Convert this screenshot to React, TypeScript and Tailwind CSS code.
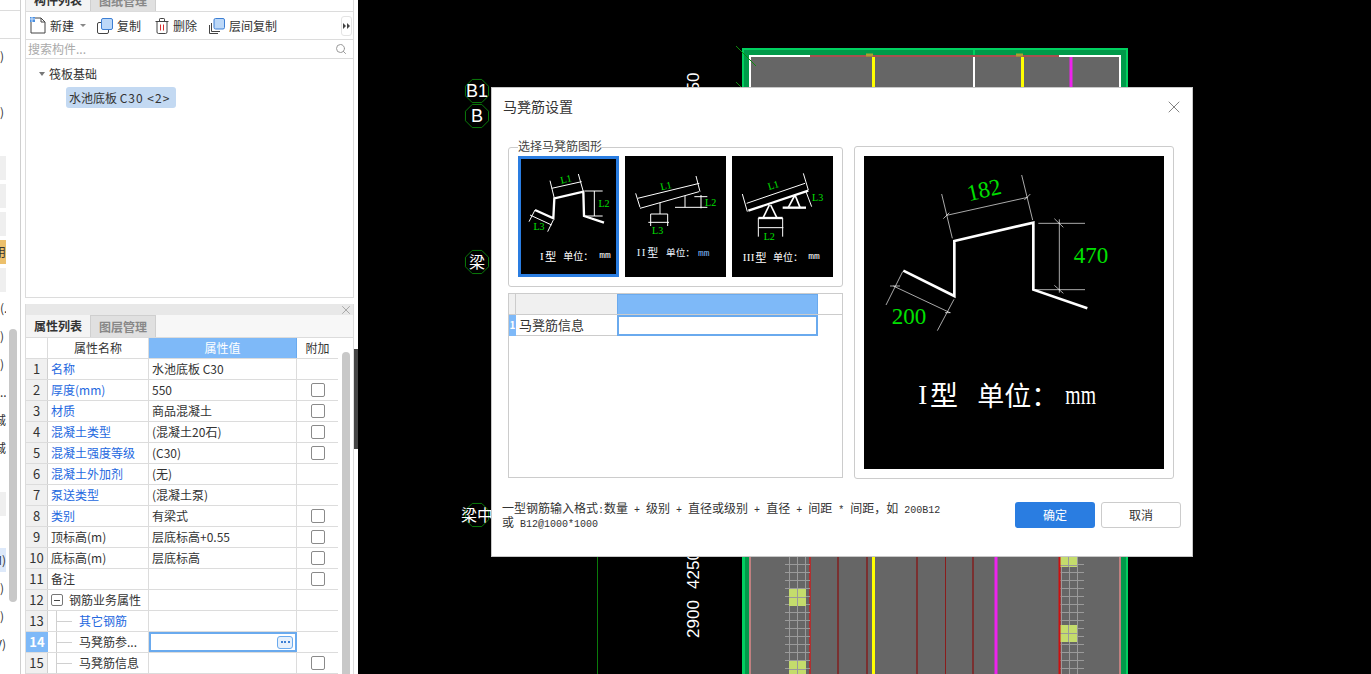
import React from "react";
import { X, Search } from "lucide-react";

const W = "#ffffff";
const G = "#00e000";

type Seg = number[];
function Lines({ segs, w, c = W }: { segs: Seg[]; w: number; c?: string }) {
  return (
    <g stroke={c} strokeWidth={w} fill="none">
      {segs.map((s, i) => (
        <line key={i} x1={s[0]} y1={s[1]} x2={s[2]} y2={s[3]} />
      ))}
    </g>
  );
}

function Label({ x, y, r = 0, t, size = 30 }: { x: number; y: number; r?: number; t: string; size?: number }) {
  return (
    <text
      x={x}
      y={y}
      fill={G}
      fontSize={size}
      textAnchor="middle"
      dominantBaseline="central"
      fontFamily="'Liberation Serif', serif"
      transform={r ? `rotate(${r} ${x} ${y})` : undefined}
    >
      {t}
    </text>
  );
}

function Cap({ x, y, t, size = 30, fill = W }: { x: number; y: number; t: string; size?: number; fill?: string }) {
  return (
    <text x={x} y={y} fill={fill} fontSize={size} dominantBaseline="central" fontFamily="'Noto Sans CJK SC', sans-serif">
      {t}
    </text>
  );
}

function Serif({ x, y, t, size = 33, fill = W, spacing = 0 }: { x: number; y: number; t: string; size?: number; fill?: string; spacing?: number }) {
  return (
    <text x={x} y={y} fill={fill} fontSize={size} letterSpacing={spacing} dominantBaseline="central" fontFamily="'Liberation Serif', serif">
      {t}
    </text>
  );
}

function Mm({ x, y, fill = W }: { x: number; y: number; fill?: string }) {
  return (
    <text x={x} y={y} fill={fill} fontSize={29} dominantBaseline="central" fontFamily="'Liberation Mono', monospace">
      mm
    </text>
  );
}

function Thumb1() {
  return (
    <svg viewBox="54 198 303 363" width={101} height={121} className="block">
      <polyline points="105,360 160,385 163,325 250,305 252,378 312,398" fill="none" stroke={W} strokeWidth={7} />
      <Lines
        w={3}
        segs={[
          [150, 272, 163, 325],
          [235, 252, 250, 305],
          [155, 295, 245, 275],
          [255, 303, 308, 303],
          [252, 378, 308, 378],
          [283, 303, 283, 378],
          [105, 360, 87, 395],
          [160, 390, 143, 425],
          [90, 375, 155, 405],
        ]}
      />
      <Label x={198} y={267} r={-13} t="L1" />
      <Label x={312} y={340} t="L2" />
      <Label x={117} y={410} t="L3" />
      <Serif x={120} y={497} t="I" />
      <Cap x={135} y={497} t="型" size={34} />
      <Cap x={190} y={497} t="单位：" />
      <Mm x={298} y={497} />
    </svg>
  );
}

function Thumb2() {
  return (
    <svg viewBox="375 198 303 363" width={101} height={121} className="block">
      <Lines
        w={3}
        segs={[
          [413, 325, 598, 280],
          [420, 355, 597, 305],
          [407, 310, 420, 352],
          [588, 258, 600, 305],
          [480, 338, 480, 372],
          [452, 372, 503, 372],
          [452, 372, 452, 408],
          [503, 372, 503, 408],
          [445, 397, 507, 397],
          [555, 318, 555, 352],
          [525, 352, 622, 352],
          [583, 320, 622, 320],
          [603, 315, 603, 355],
        ]}
      />
      <Label x={498} y={287} r={-13} t="L1" />
      <Label x={632} y={338} t="L2" />
      <Label x={473} y={420} t="L3" />
      <Serif x={410} y={487} t="II" spacing={4} fill="#dfefff" />
      <Cap x={442} y={487} t="型" size={33} fill="#eef6ff" />
      <Cap x={498} y={487} t="单位：" size={29} fill="#eef6ff" />
      <Mm x={594} y={489} fill="#7fb6f5" />
    </svg>
  );
}

function Thumb3() {
  return (
    <svg viewBox="696 198 303 363" width={101} height={121} className="block">
      <Lines w={7} segs={[[745, 362, 925, 302], [775, 384, 848, 384], [848, 353, 918, 353]]} />
      <Lines
        w={3}
        segs={[
          [740, 340, 915, 280],
          [727, 312, 742, 365],
          [910, 250, 925, 300],
          [775, 384, 775, 440],
          [848, 384, 848, 440],
          [775, 413, 850, 413],
          [918, 305, 935, 350],
        ]}
      />
      <Lines w={5} segs={[[808, 345, 790, 382], [812, 345, 830, 382], [885, 315, 865, 352], [885, 315, 900, 352]]} />
      <Label x={820} y={285} r={-17} t="L1" />
      <Label x={808} y={440} t="L2" />
      <Label x={953} y={322} t="L3" />
      <Serif x={728} y={500} t="III" spacing={1} />
      <Cap x={766} y={500} t="型" size={34} />
      <Cap x={819} y={500} t="单位：" />
      <Mm x={925} y={500} />
    </svg>
  );
}

function BigPreview() {
  return (
    <svg viewBox="42 48 900 939" width={300} height={313} className="block">
      <polyline points="160,392 313,468 313,303 550,248 550,449 712,505" fill="none" stroke={W} strokeWidth={8} />
      <Lines
        w={2}
        segs={[
          [275, 162, 307, 295],
          [515, 105, 548, 240],
          [290, 226, 533, 172],
          [280, 236, 298, 218],
          [523, 180, 541, 162],
          [565, 250, 705, 250],
          [552, 449, 705, 449],
          [628, 238, 628, 458],
          [613, 236, 640, 262],
          [613, 436, 640, 460],
          [158, 395, 108, 495],
          [312, 478, 262, 572],
          [130, 438, 300, 518],
          [120, 438, 150, 438],
          [285, 518, 302, 518],
        ]}
      />
      <Label x={402} y={150} r={-13} t="182" size={69} />
      <Label x={723} y={345} t="470" size={69} />
      <Label x={177} y={530} t="200" size={69} />
      <Serif x={205} y={766} t="I" size={81} />
      <Cap x={240} y={762} t="型" size={84} />
      <Cap x={382} y={762} t="单位：" size={81} />
      <text
        x={646}
        y={766}
        fill={W}
        fontSize={81}
        textLength={92}
        lengthAdjust="spacingAndGlyphs"
        dominantBaseline="central"
        fontFamily="'Liberation Serif', serif"
      >
        mm
      </text>
    </svg>
  );
}

function Hex({ cx, cy, t, size = 18 }: { cx: number; cy: number; t: string; size?: number }) {
  const r = 12.5;
  const pts = [0, 1, 2, 3, 4, 5, 6, 7]
    .map((i) => {
      const a = (Math.PI / 4) * i + Math.PI / 8;
      return `${cx + r * Math.cos(a)},${cy + r * Math.sin(a)}`;
    })
    .join(" ");
  return (
    <g>
      <polygon points={pts} fill="none" stroke="#0a7a0a" strokeWidth={1} />
      <text x={cx} y={cy} fill={W} fontSize={size} textAnchor="middle" dominantBaseline="central" fontFamily="'Liberation Sans', 'Noto Sans CJK SC', sans-serif">
        {t}
      </text>
    </g>
  );
}

function VText({ x, y, t }: { x: number; y: number; t: string }) {
  return (
    <text
      x={x}
      y={y}
      fill={W}
      fontSize={17}
      textAnchor="middle"
      dominantBaseline="central"
      fontFamily="'Liberation Sans', sans-serif"
      transform={`rotate(-90 ${x} ${y})`}
    >
      {t}
    </text>
  );
}

function Canvas() {
  const ticksL: number[] = [];
  for (let y = 564; y < 674; y += 8) ticksL.push(y);
  const ticksR: number[] = [];
  for (let y = 556; y < 674; y += 8) ticksR.push(y);
  return (
    <svg viewBox="358 0 1013 674" width={1013} height={674} className="block">
      <rect x={358} y={0} width={1013} height={674} fill="#000" />
      <rect x={742} y={48} width={386} height={640} fill="#00d060" />
      <rect x={744} y={50} width={382} height={640} fill="#009a4a" />
      <rect x={750} y={57} width={370} height={630} fill="#666666" />
      <Lines w={2} c="#ffffff" segs={[[749, 56, 810, 56], [1059, 56, 1121, 56], [750, 56, 750, 500], [1120, 56, 1120, 500]]} />
      <Lines w={2} c="#a85050" segs={[[810, 56, 1059, 56]]} />
      <Lines w={2} c="#00d060" segs={[[974, 49, 974, 55]]} />
      <Lines w={3} c="#ffff00" segs={[[873.5, 57, 873.5, 674], [1022.5, 57, 1022.5, 87]]} />
      <Lines w={2} c="#ffffff" segs={[[974, 57, 974, 87]]} />
      <Lines w={3} c="#ee22ee" segs={[[1071, 57, 1071, 87], [996, 557, 996, 674]]} />
      <Lines w={3} c="#a8a030" segs={[[866, 55, 873, 55], [1016, 55, 1023, 55]]} />
      <Lines w={1} c="#0d8a0d" segs={[[736, 46, 756, 66], [736, 82, 744, 90]]} />
      <rect x={749} y={557} width={2} height={117} fill="#c08080" />
      <rect x={1119} y={557} width={2} height={117} fill="#c08080" />
      <rect x={742} y={557} width={3} height={117} fill="#00d060" />
      <Lines w={2} c="#b03030" segs={[[810, 557, 810, 674]]} />
      <Lines w={2} c="#7a3030" segs={[[838, 557, 838, 674], [867, 557, 867, 674], [917, 557, 917, 674], [973, 557, 973, 674]]} />
      <Lines w={1} c="#8a1c1c" segs={[[945.5, 557, 945.5, 674]]} />
      <Lines w={1} c="#9a9a9a" segs={[[789.5, 557, 789.5, 674], [797.5, 557, 797.5, 674], [805.5, 557, 805.5, 674], [1061.5, 557, 1061.5, 674], [1069.5, 557, 1069.5, 674], [1077.5, 557, 1077.5, 674]]} />
      {ticksL.map((y) => (
        <line key={y} x1={785} x2={810} y1={y + 0.5} y2={y + 0.5} stroke="#9a9a9a" />
      ))}
      {ticksR.map((y) => (
        <line key={y} x1={1060} x2={1084} y1={y + 0.5} y2={y + 0.5} stroke="#9a9a9a" />
      ))}
      {[[789, 589, 17, 17], [789, 661, 17, 13], [1060, 557, 17, 10], [1060, 625, 17, 17]].map((r, i) => (
        <g key={i}>
          <rect x={r[0]} y={r[1]} width={r[2]} height={r[3]} fill="#c4dc6c" />
          <line x1={r[0] + 8.5} x2={r[0] + 8.5} y1={r[1]} y2={r[1] + r[3]} stroke="#9a9a9a" />
          <line x1={r[0]} x2={r[0] + r[2]} y1={r[1] + 8.5} y2={r[1] + 8.5} stroke="#9a9a9a" />
        </g>
      ))}
      <Lines w={2} c="#cc1010" segs={[[1059.5, 557, 1059.5, 674]]} />
      <Lines w={1} c="#0a7a0a" segs={[[597.5, 520, 597.5, 674]]} />
      <Hex cx={477} cy={91} t="B1" />
      <Hex cx={477} cy={116} t="B" />
      <Hex cx={477} cy={262} t="梁" size={16} />
      <Hex cx={477} cy={515} t="梁中" size={16} />
      <VText x={693} y={82} t="50" />
      <VText x={693} y={570} t="4250" />
      <VText x={693} y={619} t="2900" />
    </svg>
  );
}

function DocIcon() {
  return (
    <svg width={16} height={17} viewBox="0 0 16 17" className="block">
      <path d="M1 5v11h14V5l-4-4H5" fill="#fff" stroke="#444" strokeWidth={1} />
      <path d="M11 1v4h4" fill="none" stroke="#444" strokeWidth={1} />
      <rect x={0} y={0} width={5} height={5} fill="#4a90e2" />
      <path d="M0 2h5M2 0v5" stroke="#cfe2fa" strokeWidth={1} />
    </svg>
  );
}
function CopyIcon() {
  return (
    <svg width={16} height={16} viewBox="0 0 16 16" className="block">
      <rect x={0.5} y={4.5} width={11} height={11} rx={1.5} fill="#fff" stroke="#444" />
      <rect x={4.5} y={0.5} width={11} height={11} rx={1.5} fill="#bcd8f8" stroke="#3d7fd4" />
    </svg>
  );
}
function TrashIcon() {
  return (
    <svg width={14} height={16} viewBox="0 0 14 16" className="block">
      <path d="M2 3.5v10.5a1.5 1.5 0 0 0 1.5 1.5h7a1.5 1.5 0 0 0 1.5-1.5V3.5M0.5 3.5h13M4.5 3V1.2a.7.7 0 0 1 .7-.7h3.6a.7.7 0 0 1 .7.7V3" fill="none" stroke="#444" />
      <path d="M5.5 6.5v6M8.5 6.5v6" stroke="#d83030" />
    </svg>
  );
}
function LayerIcon() {
  return (
    <svg width={16} height={16} viewBox="0 0 16 16" className="block">
      <path d="M0.5 7v8.5H9" fill="none" stroke="#444" />
      <path d="M2.5 5v8.5H11" fill="none" stroke="#444" />
      <rect x={5} y={0.5} width={10.5} height={10.5} rx={1.5} fill="#bcd8f8" stroke="#3d7fd4" />
    </svg>
  );
}

type Row = { n: number; name: string; value?: string; blue?: boolean; check?: boolean };
const rows: Row[] = [
  { n: 1, name: "名称", value: "水池底板 C30", blue: true },
  { n: 2, name: "厚度(mm)", value: "550", blue: true, check: true },
  { n: 3, name: "材质", value: "商品混凝土", blue: true, check: true },
  { n: 4, name: "混凝土类型", value: "(混凝土20石)", blue: true, check: true },
  { n: 5, name: "混凝土强度等级", value: "(C30)", blue: true, check: true },
  { n: 6, name: "混凝土外加剂", value: "(无)", blue: true },
  { n: 7, name: "泵送类型", value: "(混凝土泵)", blue: true },
  { n: 8, name: "类别", value: "有梁式", blue: true, check: true },
  { n: 9, name: "顶标高(m)", value: "层底标高+0.55", check: true },
  { n: 10, name: "底标高(m)", value: "层底标高", check: true },
  { n: 11, name: "备注", check: true },
];

const gridCols = "grid grid-cols-[22px_101px_148px_41px] h-[21px] border-b border-[#dcdcdc]";
const numCell = "flex items-center justify-center bg-[#f0f0f0] border-r border-[#cfcfcf] text-[13px] text-[#333]";
const cell = "flex items-center border-r border-[#dcdcdc] min-w-0";

function Check() {
  return <span className="block w-[14px] h-[14px] border border-[#8a8a8a] rounded-[2px] bg-white" />;
}

function Tree() {
  return (
    <span className="relative block w-[31px] h-full shrink-0">
      <span className="absolute left-[8px] top-0 w-px bg-[#d0d0d0] h-full" />
      <span className="absolute left-[8px] top-1/2 h-px w-[16px] bg-[#d0d0d0]" />
    </span>
  );
}

function PropTable() {
  return (
    <div className="w-[312px] shrink-0">
      <div className={gridCols}>
        <div className="bg-white border-r border-[#dcdcdc]" />
        <div className={`${cell} justify-center text-[#333]`}>属性名称</div>
        <div className="flex items-center justify-center bg-[#7eb9f8] text-white border-r border-[#6aaaee]">属性值</div>
        <div className="flex items-center justify-center text-[#333]">附加</div>
      </div>
      {rows.map((r) => (
        <div key={r.n} className={gridCols}>
          <div className={numCell}>{r.n}</div>
          <div className={`${cell} pl-[3px] ${r.blue ? "text-[#2468e0]" : "text-[#333]"}`}>{r.name}</div>
          <div className={`${cell} pl-[3px] text-[#333]`}>{r.value}</div>
          <div className="flex items-center justify-center">{r.check && <Check />}</div>
        </div>
      ))}
      <div className={gridCols}>
        <div className={numCell}>12</div>
        <div className={`${cell} pl-[3px] text-[#333]`}>
          <span className="flex items-center justify-center w-[12px] h-[12px] border border-[#777] rounded-[2px] mr-[6px] shrink-0">
            <span className="block w-[6px] h-px bg-[#444]" />
          </span>
          钢筋业务属性
        </div>
        <div className={cell} />
        <div />
      </div>
      <div className={gridCols}>
        <div className={numCell}>13</div>
        <div className={`${cell} text-[#2468e0]`}>
          <Tree />
          其它钢筋
        </div>
        <div className={cell} />
        <div />
      </div>
      <div className={gridCols}>
        <div className="flex items-center justify-center bg-[#7eb9f8] text-white font-bold text-[13px]">14</div>
        <div className={`${cell} text-[#333]`}>
          <Tree />
          马凳筋参...
        </div>
        <div className="flex items-center justify-end border-2 border-[#6aaaee] pr-[2px]">
          <span className="flex items-center justify-center w-[16px] h-[13px] rounded-[3px] border border-[#6aaaee] bg-[#e6f0fc] gap-[1.5px]">
            <span className="block w-[2px] h-[2px] bg-[#3d7fd4]" />
            <span className="block w-[2px] h-[2px] bg-[#3d7fd4]" />
            <span className="block w-[2px] h-[2px] bg-[#3d7fd4]" />
          </span>
        </div>
        <div />
      </div>
      <div className={gridCols}>
        <div className={numCell}>15</div>
        <div className={`${cell} text-[#333]`}>
          <Tree />
          马凳筋信息
        </div>
        <div className={cell} />
        <div className="flex items-center justify-center">
          <Check />
        </div>
      </div>
    </div>
  );
}

const strip: { t?: string; cls?: string; end?: boolean }[] = [
  { t: ")" },
  {},
  { t: ")" },
  {},
  { cls: "bg-[#efefef]" },
  { cls: "bg-[#efefef]" },
  { cls: "bg-[#efefef]" },
  { t: "用", cls: "bg-[#ecc06c]", end: true },
  { cls: "bg-[#efefef]" },
  { t: "(." },
  { t: ")" },
  { t: ")" },
  { t: "..." },
  { t: "城", end: true },
  { t: "城", end: true },
  {},
  { cls: "bg-[#efefef]" },
  {},
  { t: "M)", cls: "bg-[#dde9fa]", end: true },
  { t: ")" },
  { t: ")" },
  { t: "V)", end: true },
];

function LeftStrip() {
  return (
    <div className="relative w-[21px] h-full shrink-0 border-r border-[#cfcfcf] overflow-hidden">
      <div className="h-[11px] border-b border-[#dcdcdc]" />
      <div className="h-[28px] border-b border-[#dcdcdc]" />
      <div className="mt-[3px]">
        {strip.map((s, i) => (
          <div key={i} className="h-[28px] flex items-center">
            <div
              className={`w-[6px] h-[24px] flex items-center overflow-hidden whitespace-nowrap text-[12px] text-[#333] ${s.end ? "justify-end" : ""} ${s.cls ?? ""}`}
            >
              <span className="shrink-0">{s.t}</span>
            </div>
          </div>
        ))}
      </div>
      <div className="absolute left-[9px] top-[329px] w-[8px] h-[273px] rounded-[4px] bg-[#c8c8c8]" />
    </div>
  );
}

function Tab({ t, on }: { t: string; on?: boolean }) {
  return (
    <div
      className={`w-[65px] h-[22px] shrink-0 flex items-center justify-center font-bold border-r border-[#cfcfcf] ${
        on ? "bg-[#f4f4f4] text-[#333]" : "bg-[#e0e0e0] text-[#888] border-t"
      }`}
    >
      {t}
    </div>
  );
}

function LeftPanels() {
  return (
    <div className="w-[329px] h-full shrink-0 ml-[4px] flex flex-col">
      <div className="h-[298px] border-x border-b border-[#dcdcdc] flex flex-col">
        <div className="h-[12px] flex items-end overflow-hidden border-b border-[#dcdcdc] shrink-0">
          <Tab t="构件列表" on />
          <Tab t="图纸管理" />
        </div>
        <div className="h-[28px] flex items-center pl-[4px] border-b border-[#dcdcdc] text-[#333] shrink-0 relative">
          <DocIcon />
          <span className="ml-[4px]">新建</span>
          <span className="ml-[6px] w-0 h-0 border-x-[3px] border-x-transparent border-t-[3px] border-t-[#888]" />
          <span className="ml-[11px]">
            <CopyIcon />
          </span>
          <span className="ml-[4px]">复制</span>
          <span className="ml-[14px]">
            <TrashIcon />
          </span>
          <span className="ml-[4px]">删除</span>
          <span className="ml-[12px]">
            <LayerIcon />
          </span>
          <span className="ml-[4px]">层间复制</span>
          <span className="ml-auto mr-[1px] w-[11px] h-[20px] rounded-[3px] border border-[#e4e4e4] flex items-center justify-center gap-px">
            <span className="w-0 h-0 border-y-[3px] border-y-transparent border-l-[3px] border-l-[#444]" />
            <span className="w-0 h-0 border-y-[3px] border-y-transparent border-l-[3px] border-l-[#444]" />
          </span>
        </div>
        <div className="h-[19px] flex items-center justify-between pl-[2px] pr-[6px] border-b border-[#dcdcdc] text-[#aaa] shrink-0">
          <span>搜索构件...</span>
          <Search size={12} color="#999" />
        </div>
        <div className="flex-1 pt-[5px] text-[#333]">
          <div className="h-[20px] flex items-center pl-[13px]">
            <span className="w-0 h-0 border-x-[3.5px] border-x-transparent border-t-[4px] border-t-[#777] mr-[4px]" />
            <span>筏板基础</span>
          </div>
          <div className="ml-[40px] mt-[3px] w-[110px] h-[21px] rounded-[3px] bg-[#c3d9f2] flex items-center pl-[3px] whitespace-pre">
            水池底板 <span className="tracking-[1px]">C30 &lt;2&gt;</span>
          </div>
        </div>
      </div>
      <div className="h-[6px] shrink-0" />
      <div className="flex-1 min-h-0 overflow-hidden border-x border-[#dcdcdc] flex flex-col">
        <div className="h-[11px] bg-[#e8e8e8] flex items-center justify-end shrink-0">
          <X size={14} color="#a0a0a0" strokeWidth={1.5} />
        </div>
        <div className="h-[23px] flex items-end border-b border-[#dcdcdc] bg-[#f7f7f7] shrink-0">
          <Tab t="属性列表" on />
          <Tab t="图层管理" />
        </div>
        <div className="flex flex-1 min-h-0">
          <PropTable />
          <div className="flex-1 flex justify-center pt-[14px]">
            <div className="w-[8px] h-[400px] bg-[#c8c8c8] rounded-[4px]" />
          </div>
        </div>
      </div>
    </div>
  );
}

function Dialog() {
  const M = "[font-family:'Liberation_Mono',monospace] text-[10px] leading-[14px] whitespace-pre";
  return (
    <div className="absolute left-[491px] top-[87px] w-[702px] h-[470px] bg-white border border-[#c8c8c8] flex flex-col">
      <div className="h-[39px] shrink-0 flex items-center justify-between pl-[11px] pr-[8px] pb-[2px]">
        <span className="text-[14px] text-[#333]">马凳筋设置</span>
        <X size={20} color="#777" strokeWidth={1.1} />
      </div>
      <div className="flex pl-[16px] gap-[11px]">
        <div className="w-[335px] shrink-0 flex flex-col pt-[20px]">
          <div className="relative h-[140px] border border-[#cccccc] rounded-[3px] pt-[8px] pl-[9px]">
            <span className="absolute left-[9px] top-[-9px] bg-white text-[#444] leading-[14px]">选择马凳筋图形</span>
            <div className="flex gap-[6px]">
              <div className="relative bg-black w-[101px] h-[121px] [outline:3px_solid_#2a7de1] [outline-offset:-3px]">
                <Thumb1 />
              </div>
              <div className="bg-black w-[101px] h-[121px]">
                <Thumb2 />
              </div>
              <div className="bg-black w-[101px] h-[121px]">
                <Thumb3 />
              </div>
            </div>
          </div>
          <div className="mt-[6px] h-[185px] border border-[#cccccc]">
            <div className="flex h-[21px] border-b border-[#cccccc]">
              <div className="w-[7px] bg-[#f0f0f0] border-r border-[#cccccc]" />
              <div className="w-[101px] bg-[#f0f0f0]" />
              <div className="w-[201px] bg-[#7eb9f8] border border-[#6aaaee] border-b-0" />
            </div>
            <div className="flex h-[21px]">
              <div className="w-[7px] bg-[#7eb9f8] text-white font-bold text-[10px] leading-[20px] text-center overflow-hidden">1</div>
              <div className="w-[101px] border-b border-[#cccccc] pl-[3px] text-[13px] leading-[20px] text-[#333]">马凳筋信息</div>
              <div className="w-[201px] border-2 border-[#6aaaee]" />
            </div>
          </div>
        </div>
        <div className="w-[320px] h-[333px] mt-[19px] shrink-0 border border-[#cccccc] rounded-[3px] p-[9px]">
          <div className="bg-black w-[300px] h-[313px]">
            <BigPreview />
          </div>
        </div>
      </div>
      <div className="flex justify-between pl-[10px] pr-[11px] mt-[23px]">
        <div className="w-[460px] text-[12px] leading-[14px] text-[#333] -mt-px">
          <div className="whitespace-pre h-[14px]">
            一型钢筋输入格式<span className={M}>:</span>数量<span className={M}> + </span>级别<span className={M}> + </span>直径或级别<span className={M}> + </span>直径<span className={M}> + </span>间距<span className={M}> * </span>间距，如<span className={M}> 200B12</span>
          </div>
          <div className="whitespace-pre h-[14px]">
            或<span className={M}> B12@1000*1000</span>
          </div>
        </div>
        <div className="flex gap-[6px]">
          <div className="w-[80px] h-[26px] rounded-[3px] bg-[#2a7de1] text-white flex items-center justify-center">确定</div>
          <div className="w-[80px] h-[26px] rounded-[3px] border border-[#cccccc] text-[#333] flex items-center justify-center">取消</div>
        </div>
      </div>
    </div>
  );
}

export default function App() {
  return (
    <div className="relative w-[1371px] h-[674px] overflow-hidden bg-white flex text-[12px] [font-family:'Noto_Sans_CJK_SC','Noto_Sans',sans-serif]">
      <LeftStrip />
      <LeftPanels />
      <div className="relative w-[4px] h-full shrink-0">
        <div className="absolute left-0 top-[349px] w-[4px] h-[100px] bg-[#444]" />
      </div>
      <div className="flex-1 h-full bg-black overflow-hidden">
        <Canvas />
      </div>
      <Dialog />
    </div>
  );
}
